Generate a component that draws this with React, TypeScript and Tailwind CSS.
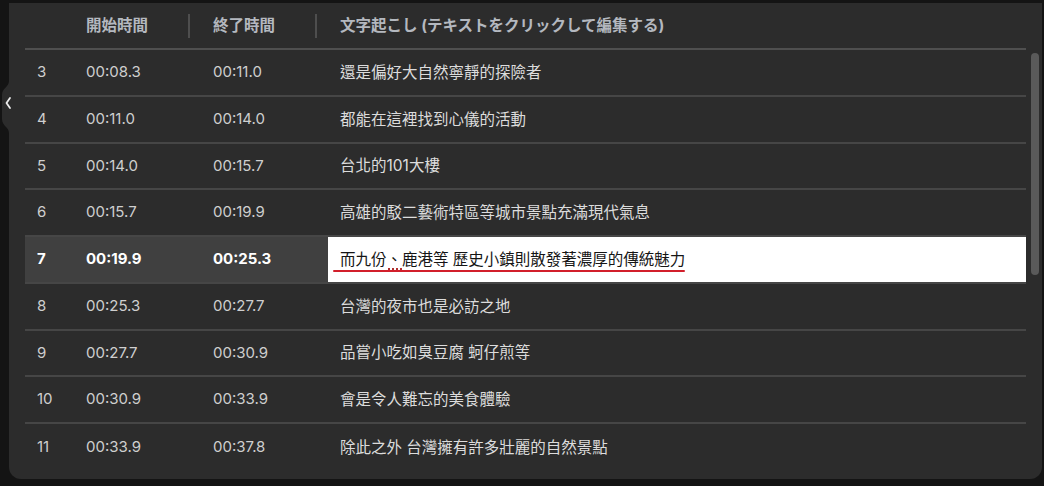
const FONT = 'font-["Inter","Noto_Sans_CJK_TC",sans-serif]'

interface Row {
  no: number
  start: string
  end: string
  text: string
}

const ROWS: Row[] = [
  { no: 3, start: '00:08.3', end: '00:11.0', text: '還是偏好大自然寧靜的探險者' },
  { no: 4, start: '00:11.0', end: '00:14.0', text: '都能在這裡找到心儀的活動' },
  { no: 5, start: '00:14.0', end: '00:15.7', text: '台北的101大樓' },
  { no: 6, start: '00:15.7', end: '00:19.9', text: '高雄的駁二藝術特區等城市景點充滿現代氣息' },
  { no: 7, start: '00:19.9', end: '00:25.3', text: '而九份、鹿港等 歷史小鎮則散發著濃厚的傳統魅力' },
  { no: 8, start: '00:25.3', end: '00:27.7', text: '台灣的夜市也是必訪之地' },
  { no: 9, start: '00:27.7', end: '00:30.9', text: '品嘗小吃如臭豆腐 蚵仔煎等' },
  { no: 10, start: '00:30.9', end: '00:33.9', text: '會是令人難忘的美食體驗' },
  { no: 11, start: '00:33.9', end: '00:37.8', text: '除此之外 台灣擁有許多壯麗的自然景點' },
]

const ACTIVE = 7

function HeaderBar() {
  return <div className="h-[24px] w-[2px] bg-[#4e4e4e]" />
}

export default function App() {
  return (
    <div className={`${FONT} flex h-[486px] w-[1044px] bg-[#141414] pb-[7px] pl-[9px] pr-[2px] pt-[3px]`}>
      <div className="relative flex-1 rounded-b-[12px] bg-[#2c2c2c] px-[16px]">
        {/* side tab */}
        <svg className="absolute left-[-9px] top-[78px]" width="12" height="52" viewBox="0 0 12 52">
          <path d="M9 0 C9 6 2 7 2 14 L2 38 C2 45 9 46 9 52 L12 52 L12 0 Z" fill="#2c2c2c" />
          <path d="M10 17 L6.5 22 L10 27" stroke="#ececec" strokeWidth="1.8" fill="none" strokeLinecap="round" strokeLinejoin="round" />
        </svg>

        {/* scrollbar thumb */}
        <div className="absolute right-[3px] top-[50px] h-[222px] w-[8px] rounded-full bg-[#5a5a5a]" />

        <div className="flex h-[47px] items-center border-b-2 border-[#4f4f4f] text-[15.5px] font-bold text-[#b4b8bf]">
          <div className="w-[49px]" />
          <div className="flex w-[127px] items-center justify-between pl-[12px] pr-[11px]">
            <span>開始時間</span>
            <HeaderBar />
          </div>
          <div className="flex w-[127px] items-center justify-between pl-[12px] pr-[11px]">
            <span>終了時間</span>
            <HeaderBar />
          </div>
          <div className="pl-[12px]">文字起こし (テキストをクリックして編集する)</div>
        </div>

        {ROWS.map((r, i) => {
          const active = r.no === ACTIVE
          const last = i === ROWS.length - 1
          return (
            <div
              key={r.no}
              className={`flex h-[46.75px] items-stretch text-[15px] ${last ? '' : 'border-b-2 border-[#464646]'} ${active ? 'bg-[#404040] font-bold text-white' : 'text-[#cfcfcf]'}`}
            >
              <div className="flex w-[49px] items-center pl-[12px]">{r.no}</div>
              <div className="flex w-[127px] items-center pl-[12px]">{r.start}</div>
              <div className="flex w-[127px] items-center pl-[12px]">{r.end}</div>
              {active ? (
                <div className="flex flex-1 items-center bg-white pl-[12px] text-[15.5px] font-normal text-[#151515]">
                  <span className="relative">
                    {r.text}
                    <span className="absolute bottom-[-1px] left-[-7px] right-0 h-[2.5px] rounded-full bg-[#d21f2b]" />
                    <span className="absolute bottom-[1px] left-[48px] w-[14px] border-b-2 border-dotted border-[#b03030]" />
                  </span>
                </div>
              ) : (
                <div className="flex flex-1 items-center pl-[12px] text-[15.5px] text-[#dcdcdc]">{r.text}</div>
              )}
            </div>
          )
        })}
      </div>
    </div>
  )
}
